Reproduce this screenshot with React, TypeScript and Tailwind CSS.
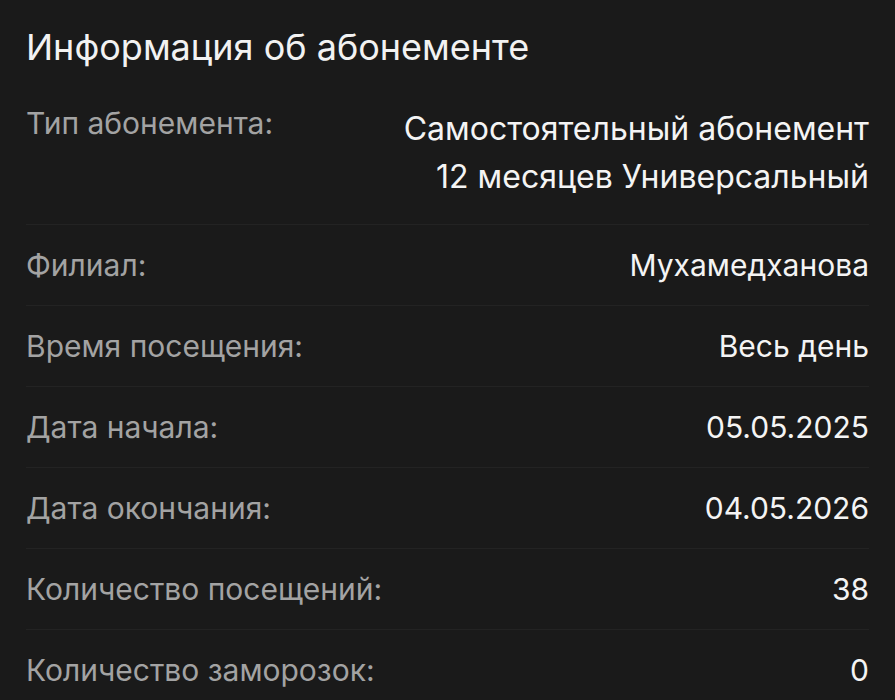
import React from "react";

const rows: { label: string; value: string }[] = [
  { label: "Филиал:", value: "Мухамедханова" },
  { label: "Время посещения:", value: "Весь день" },
  { label: "Дата начала:", value: "05.05.2025" },
  { label: "Дата окончания:", value: "04.05.2026" },
  { label: "Количество посещений:", value: "38" },
  { label: "Количество заморозок:", value: "0" },
];

export default function App() {
  return (
    <div
      className="w-[895px] h-[700px] overflow-hidden bg-[#1a1a1a] px-[26px]"
      style={{ fontFamily: "Inter, 'Noto Sans', sans-serif" }}
    >
      <h1 className="pt-[25px] text-[36px] leading-[44px] font-normal text-[#f2f2f2]">
        Информация об абонементе
      </h1>
      <div className="flex h-[156px] items-start justify-between border-b border-[#232323] pt-[36px]">
        <div className="text-[30px] leading-[36px] text-[#a3a3a3]">Тип абонемента:</div>
        <div className="text-right text-[32px] leading-[48px] text-[#f4f4f4]">
          <div>Самостоятельный абонемент</div>
          <div>12 месяцев Универсальный</div>
        </div>
      </div>
      {rows.map((r) => (
        <div
          key={r.label}
          className="flex h-[81px] items-center justify-between border-b border-[#232323]"
        >
          <div className="text-[30px] leading-[36px] text-[#a3a3a3]">{r.label}</div>
          <div className="text-right text-[30px] leading-[36px] text-[#f4f4f4]">{r.value}</div>
        </div>
      ))}
    </div>
  );
}
